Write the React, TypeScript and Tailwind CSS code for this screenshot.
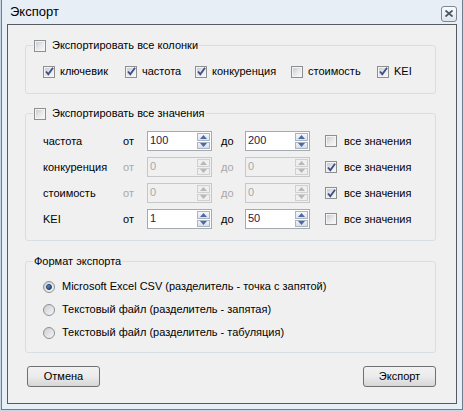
import React from "react";

// ============================================================================
// SMALL WIN7-STYLE CONTROLS
// ============================================================================

const CheckBox: React.FC<{ checked?: boolean }> = ({ checked }) => (
  <span className="w-[12px] h-[12px] shrink-0 border border-[#8e8f8f] bg-[#f4f4f4] p-[1px] flex">
    <span className="flex-1 bg-gradient-to-br from-[#c8ccd2] via-[#e6e7e9] to-[#f8f8f8] flex items-center justify-center">
      {checked && (
        <svg width="9" height="9" viewBox="0 0 9 9">
          <path d="M1 4.5 L3.3 7.2 L8 0.8" fill="none" stroke="#3d4f86" strokeWidth="1.8" />
        </svg>
      )}
    </span>
  </span>
);

const Radio: React.FC<{ checked?: boolean }> = ({ checked }) => (
  <span className="w-[12px] h-[12px] shrink-0 rounded-full border border-[#8e8f8f] bg-gradient-to-br from-[#c9cdd3] to-[#f7f7f7] flex items-center justify-center">
    {checked && (
      <span className="w-[6px] h-[6px] rounded-full bg-gradient-to-br from-[#6aa1d6] to-[#173f7a] border border-[#1c3c6a]" />
    )}
  </span>
);

const Arrow: React.FC<{ up?: boolean; disabled?: boolean }> = ({ up, disabled }) => (
  <svg width="7" height="4" viewBox="0 0 7 4">
    <path
      d={up ? "M0 4 L3.5 0 L7 4 Z" : "M0 0 L3.5 4 L7 0 Z"}
      fill={disabled ? "#b8b8b8" : "#4d6aa3"}
    />
  </svg>
);

const Spin: React.FC<{ value: string; disabled?: boolean }> = ({ value, disabled }) => (
  <div
    className={
      disabled
        ? "w-[65px] h-[20px] border border-[#c7c7c7] bg-[#f0f0f0] flex"
        : "w-[65px] h-[20px] border border-[#a5a9b0] bg-white flex"
    }
  >
    <span
      className={
        disabled
          ? "flex-1 pl-[2px] leading-[17px] text-[#a8a8a8]"
          : "flex-1 pl-[2px] leading-[17px] text-[#1e1a4a]"
      }
    >
      {value}
    </span>
    <div className="w-[15px] flex flex-col p-[1px] gap-[1px]">
      <span
        className={
          disabled
            ? "flex-1 border border-[#d0d0d0] bg-[#efefef] flex items-center justify-center"
            : "flex-1 border border-[#a9b4c4] bg-gradient-to-b from-[#f6f7f9] to-[#dfe3e9] flex items-center justify-center"
        }
      >
        <Arrow up disabled={disabled} />
      </span>
      <span
        className={
          disabled
            ? "flex-1 border border-[#d0d0d0] bg-[#efefef] flex items-center justify-center"
            : "flex-1 border border-[#a9b4c4] bg-gradient-to-b from-[#f1f3f6] to-[#d9dee6] flex items-center justify-center"
        }
      >
        <Arrow disabled={disabled} />
      </span>
    </div>
  </div>
);

const Button: React.FC<{ children: React.ReactNode }> = ({ children }) => (
  <div className="w-[73px] h-[21px] rounded-[3px] border border-[#707070] bg-gradient-to-b from-[#f2f2f2] via-[#ebebeb] to-[#d6d6d6] flex items-center justify-center">
    {children}
  </div>
);

// ============================================================================
// DATA
// ============================================================================

const columns = [
  { label: "ключевик", checked: true, w: "w-[82px]" },
  { label: "частота", checked: true, w: "w-[70px]" },
  { label: "конкуренция", checked: true, w: "w-[96px]" },
  { label: "стоимость", checked: false, w: "w-[86px]" },
  { label: "KEI", checked: true, w: "w-[40px]" },
];

const ranges = [
  { label: "частота", from: "100", to: "200", all: false },
  { label: "конкуренция", from: "0", to: "0", all: true },
  { label: "стоимость", from: "0", to: "0", all: true },
  { label: "KEI", from: "1", to: "50", all: false },
];

const formats = [
  "Microsoft Excel CSV (разделитель - точка с запятой)",
  "Текстовый файл (разделитель - запятая)",
  "Текстовый файл (разделитель - табуляция)",
];

// ============================================================================
// MAIN APP COMPONENT
// ============================================================================

export default function App() {
  return (
    <div className="w-[464px] h-[412px] bg-[#c9d6e3] overflow-hidden font-['Liberation_Sans',sans-serif] text-[11px] text-black">
      {/* window frame */}
      <div className="ml-[1px] w-[462px] h-[410px] border-x border-b border-[#6f7d8c] bg-[#e8eef5] flex flex-col px-[5px] pb-[5px]">
        {/* title bar */}
        <div className="h-[24px] flex items-center justify-between pl-[3px]">
          <span className="text-[13px] text-black">Экспорт</span>
          <span className="w-[16px] h-[16px] mt-[3px] rounded-[3px] border border-[#7b8796] bg-gradient-to-b from-[#fbfcfd] to-[#dfe5ec] flex items-center justify-center">
            <svg width="8" height="7" viewBox="0 0 8 7">
              <path d="M0.5 0.5 L7.5 6.5 M7.5 0.5 L0.5 6.5" stroke="#4b5563" strokeWidth="1.8" />
            </svg>
          </span>
        </div>

        {/* client area */}
        <div className="flex-1 border border-[#555a60] bg-[#f0f0f0] pl-[17px] pt-[20px]">
          {/* columns group */}
          <div className="relative w-[411px] h-[49px] border border-[#d5dfe5] rounded-[3px]">
            <div className="absolute -top-[7px] left-[7px] bg-[#f0f0f0] px-[1px] flex items-center gap-[6px] h-[13px]">
              <CheckBox />
              <span>Экспортировать все колонки</span>
            </div>
            <div className="flex items-center h-[13px] mt-[19px] pl-[17px]">
              {columns.map((c) => (
                <div key={c.label} className={`${c.w} flex items-center gap-[5px]`}>
                  <CheckBox checked={c.checked} />
                  <span>{c.label}</span>
                </div>
              ))}
            </div>
          </div>

          {/* values group */}
          <div className="relative w-[411px] h-[128px] mt-[19px] border border-[#d5dfe5] rounded-[3px] pt-[14px] pl-[17px]">
            <div className="absolute -top-[7px] left-[7px] bg-[#f0f0f0] px-[1px] flex items-center gap-[6px] h-[13px]">
              <CheckBox />
              <span>Экспортировать все значения</span>
            </div>
            {ranges.map((r) => {
              const dis = r.all;
              return (
                <div key={r.label} className="h-[26px] flex items-center">
                  <span className="w-[80px]">{r.label}</span>
                  <span className={dis ? "w-[24px] text-[#a8a8a8]" : "w-[24px]"}>от</span>
                  <Spin value={r.from} disabled={dis} />
                  <span className={dis ? "w-[24px] ml-[9px] text-[#a8a8a8]" : "w-[24px] ml-[9px]"}>до</span>
                  <Spin value={r.to} disabled={dis} />
                  <div className="ml-[15px] flex items-center gap-[7px]">
                    <CheckBox checked={r.all} />
                    <span>все значения</span>
                  </div>
                </div>
              );
            })}
          </div>

          {/* format group */}
          <div className="relative w-[411px] h-[92px] mt-[20px] border border-[#d5dfe5] rounded-[3px] pt-[13px] pl-[17px]">
            <span className="absolute -top-[8px] left-[7px] bg-[#f0f0f0] px-[1px] leading-[14px]">
              Формат экспорта
            </span>
            {formats.map((f, i) => (
              <div key={f} className="h-[23px] flex items-center gap-[7px]">
                <Radio checked={i === 0} />
                <span>{f}</span>
              </div>
            ))}
          </div>

          {/* buttons */}
          <div className="w-[411px] mt-[13px] pl-[2px] flex justify-between">
            <Button>Отмена</Button>
            <Button>Экспорт</Button>
          </div>
        </div>
      </div>
    </div>
  );
}
